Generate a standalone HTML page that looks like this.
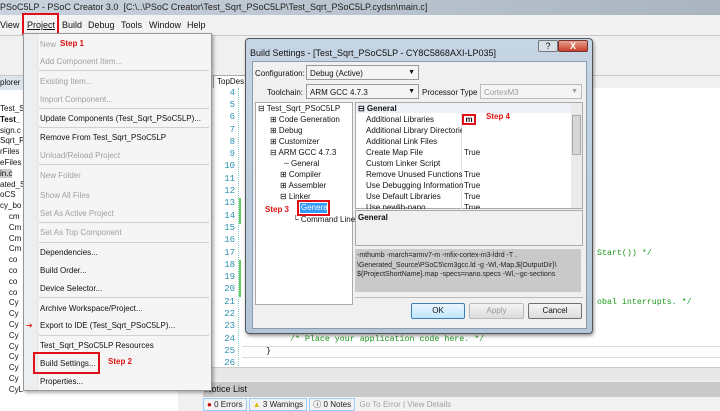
<!DOCTYPE html>
<html><head><meta charset="utf-8"><style>
*{margin:0;padding:0;box-sizing:border-box}
body{width:720px;height:411px;overflow:hidden;position:relative;background:#f0f0f0;font-family:"Liberation Sans",sans-serif;font-size:8px;color:#111}
.a{position:absolute;white-space:nowrap}
.red{color:#e01010;font-weight:bold}
.box{position:absolute;border:2px solid #e0101a}
.dis{color:#a0a0a0}
.sep{position:absolute;left:39px;width:170px;height:1px;background:#d0d0d0}
.ln{position:absolute;left:213px;width:22px;text-align:right;font-family:"Liberation Mono",monospace;font-size:9px;color:#2b91af}
.code{position:absolute;font-family:"Liberation Mono",monospace;font-size:8.3px;color:#1a9a1a;white-space:nowrap}
.tr{position:absolute;font-size:8px;white-space:nowrap}
.pg{position:absolute;left:366px;font-size:8px;white-space:nowrap}
.pv{position:absolute;left:464px;font-size:8px}
.btn{position:absolute;top:303px;height:16px;border:1px solid #707070;border-radius:2px;background:linear-gradient(#f4f4f4,#dcdcdc);text-align:center;line-height:14px;font-size:8px}
.mb{position:absolute;top:20px;font-size:9px}
</style></head><body>
<div class="a" style="left:0;top:0;width:720px;height:15px;background:linear-gradient(90deg,#c9d3dd,#b9c4cf 50%,#a9b4bf);"></div>
<div class="a" style="left:0;top:2px;font-size:9px;color:#222">PSoC5LP - PSoC Creator 3.0 &nbsp;[C:\..\PSoC Creator\Test_Sqrt_PSoC5LP\Test_Sqrt_PSoC5LP.cydsn\main.c]</div>
<div class="a" style="left:0;top:15px;width:720px;height:20px;background:#f2f2f2"></div>
<div class="mb" style="left:0">View</div>
<div class="mb" style="left:27px;text-decoration:underline">Project</div>
<div class="box" style="left:22px;top:13px;width:37px;height:22px"></div>
<div class="mb" style="left:62px">Build</div>
<div class="mb" style="left:88px">Debug</div>
<div class="mb" style="left:121px">Tools</div>
<div class="mb" style="left:149px">Window</div>
<div class="mb" style="left:187px">Help</div>
<div class="a" style="left:0;top:35px;width:720px;height:1px;background:#c8c8c8"></div>
<div class="a" style="left:0;top:75px;width:720px;height:1px;background:#c8c8c8"></div>
<div class="a" style="left:0;top:76px;width:23px;height:335px;background:#fff"></div>
<div class="a" style="left:0;top:76px;width:23px;height:14px;background:#dde4ec"></div>
<div class="a" style="left:0;top:78px;font-size:8px">plorer</div>
<div class="a" style="left:0;top:104px;font-size:8px;line-height:10.8px">Test_S<br><b>Test_</b><br>sign.c<br>Sqrt_P<br>rFiles<br>eFiles<br><span style="background:#ccc">in.c</span><br>ated_S<br>oCS<br>cy_bo<br>&nbsp;&nbsp;&nbsp;&nbsp;cm<br>&nbsp;&nbsp;&nbsp;&nbsp;Cm<br>&nbsp;&nbsp;&nbsp;&nbsp;Cm<br>&nbsp;&nbsp;&nbsp;&nbsp;Cm<br>&nbsp;&nbsp;&nbsp;&nbsp;co<br>&nbsp;&nbsp;&nbsp;&nbsp;co<br>&nbsp;&nbsp;&nbsp;&nbsp;co<br>&nbsp;&nbsp;&nbsp;&nbsp;co<br>&nbsp;&nbsp;&nbsp;&nbsp;Cy<br>&nbsp;&nbsp;&nbsp;&nbsp;Cy<br>&nbsp;&nbsp;&nbsp;&nbsp;Cy<br>&nbsp;&nbsp;&nbsp;&nbsp;Cy<br>&nbsp;&nbsp;&nbsp;&nbsp;Cy<br>&nbsp;&nbsp;&nbsp;&nbsp;Cy<br>&nbsp;&nbsp;&nbsp;&nbsp;Cy<br>&nbsp;&nbsp;&nbsp;&nbsp;Cy<br>&nbsp;&nbsp;&nbsp;&nbsp;CyLib.h</div>
<div class="a" style="left:23px;top:376px;width:155px;height:35px;background:#fff"></div>
<div class="a" style="left:212px;top:88px;width:508px;height:280px;background:#fff"></div>
<div class="a" style="left:213px;top:75px;width:34px;height:13px;background:#fff;border:1px solid #aaa;border-bottom:none;font-size:8px;padding:1px 0 0 3px">TopDes</div>
<div class="a" style="left:238px;top:88px;width:1px;height:280px;border-left:1px dotted #7cb"></div>
<div class="a" style="left:239px;top:198px;width:2px;height:26px;background:#6c6"></div>
<div class="a" style="left:239px;top:260px;width:2px;height:37px;background:#6c6"></div>
<div class="ln" style="top:88px">4</div><div class="ln" style="top:100px">5</div><div class="ln" style="top:112px">6</div><div class="ln" style="top:125px">7</div><div class="ln" style="top:137px">8</div><div class="ln" style="top:149px">9</div><div class="ln" style="top:161px">10</div><div class="ln" style="top:174px">11</div><div class="ln" style="top:186px">12</div><div class="ln" style="top:198px">13</div><div class="ln" style="top:211px">14</div><div class="ln" style="top:223px">15</div><div class="ln" style="top:235px">16</div><div class="ln" style="top:248px">17</div><div class="ln" style="top:260px">18</div><div class="ln" style="top:272px">19</div><div class="ln" style="top:284px">20</div><div class="ln" style="top:297px">21</div><div class="ln" style="top:309px">22</div><div class="ln" style="top:321px">23</div><div class="ln" style="top:334px">24</div><div class="ln" style="top:346px">25</div><div class="ln" style="top:358px">26</div>
<div class="code" style="left:597px;top:249px">Start()) */</div>
<div class="code" style="left:597px;top:298px">obal interrupts. */</div>
<div class="code" style="left:290px;top:335px">/* Place your application code here. */</div>
<div class="a" style="left:242px;top:346px;width:478px;height:12px;border-top:1px solid #ddd;border-bottom:1px solid #ddd"></div>
<div class="code" style="left:266px;top:347px;color:#111">}</div>
<div class="a" style="left:205px;top:367px;width:515px;height:14px;background:#e8e8e8;border-top:1px solid #ccc"></div>
<div class="a" style="left:203px;top:382px;width:517px;height:15px;background:#c9c9c9"></div>
<div class="a" style="left:205px;top:384px;font-size:9px">Notice List</div>
<div class="a" style="left:203px;top:397px;width:517px;height:14px;background:#f2f2f2"></div>
<div class="a" style="left:203px;top:399px;font-size:8px;color:#222"><span style="border:1px solid #9cf;padding:1px 3px"><span style="color:#c00">●</span> 0 Errors</span> <span style="border:1px solid #9cf;padding:1px 3px"><span style="color:#db0">▲</span> 3 Warnings</span> <span style="border:1px solid #9cf;padding:1px 3px">ⓘ 0 Notes</span> <span class="dis">&nbsp;Go To Error | View Details</span></div>
<div class="a" style="left:23px;top:33px;width:189px;height:358px;background:#f5f5f5;border:1px solid #979797;box-shadow:2px 2px 3px rgba(0,0,0,.3)"></div>
<div class="a" style="left:24px;top:34px;width:14px;height:356px;background:#eceef0;border-right:1px solid #e2e2e2"></div>
<div class="a dis" style="left:40px;top:40px">New</div><div class="a red" style="left:60px;top:39px">Step 1</div>
<div class="a dis" style="left:40px;top:57px">Add Component Item...</div>
<div class="sep" style="top:70px"></div>
<div class="a dis" style="left:40px;top:77px">Existing Item...</div>
<div class="a dis" style="left:40px;top:95px">Import Component...</div>
<div class="sep" style="top:108px"></div>
<div class="a" style="left:40px;top:114px">Update Components (Test_Sqrt_PSoC5LP)...</div>
<div class="sep" style="top:127px"></div>
<div class="a" style="left:40px;top:133px">Remove From Test_Sqrt_PSoC5LP</div>
<div class="a dis" style="left:40px;top:151px">Unload/Reload Project</div>
<div class="sep" style="top:164px"></div>
<div class="a dis" style="left:40px;top:171px">New Folder</div>
<div class="a dis" style="left:40px;top:191px">Show All Files</div>
<div class="a dis" style="left:40px;top:209px">Set As Active Project</div>
<div class="sep" style="top:222px"></div>
<div class="a dis" style="left:40px;top:228px">Set As Top Component</div>
<div class="sep" style="top:242px"></div>
<div class="a" style="left:40px;top:248px">Dependencies...</div>
<div class="a" style="left:40px;top:266px">Build Order...</div>
<div class="a" style="left:40px;top:284px">Device Selector...</div>
<div class="sep" style="top:297px"></div>
<div class="a" style="left:40px;top:304px">Archive Workspace/Project...</div>
<div class="a" style="left:40px;top:321px">Export to IDE (Test_Sqrt_PSoC5LP)...</div>
<div class="a" style="left:26px;top:321px;color:#d22;font-size:8px">➔</div>
<div class="sep" style="top:335px"></div>
<div class="a" style="left:40px;top:341px">Test_Sqrt_PSoC5LP Resources</div>
<div class="a" style="left:40px;top:359px">Build Settings...</div>
<div class="box" style="left:33px;top:352px;width:67px;height:22px"></div>
<div class="a red" style="left:108px;top:357px">Step 2</div>
<div class="a" style="left:40px;top:377px">Properties...</div>
<div class="a" style="left:245px;top:38px;width:348px;height:296px;background:linear-gradient(#c5d5e4,#b3c6d8);border:1px solid #555;border-radius:4px;box-shadow:1px 2px 3px rgba(0,0,0,.4)"></div>
<div class="a" style="left:250px;top:48px;font-size:9px;color:#111">Build Settings - [Test_Sqrt_PSoC5LP - CY8C5868AXI-LP035]</div>
<div class="a" style="left:538px;top:40px;width:20px;height:12px;border:1px solid #777;border-radius:2px;background:#d8e0e8;text-align:center;font-size:9px;line-height:10px">?</div>
<div class="a" style="left:558px;top:40px;width:30px;height:12px;border:1px solid #733;border-radius:2px;background:linear-gradient(#e8a090,#c8402c);color:#fff;text-align:center;font-size:9px;line-height:10px;font-weight:bold">X</div>
<div class="a" style="left:252px;top:61px;width:335px;height:268px;background:#f0f0f0;border:1px solid #8c9cac"></div>
<div class="a" style="left:255px;top:69px">Configuration:</div>
<div class="a" style="left:306px;top:65px;width:113px;height:15px;background:#f4f4f4;border:1px solid #999;padding:3px 0 0 3px">Debug (Active)<span style="position:absolute;right:3px;font-size:7px">▼</span></div>
<div class="a" style="left:267px;top:88px">Toolchain:</div>
<div class="a" style="left:306px;top:84px;width:113px;height:15px;background:#f4f4f4;border:1px solid #999;padding:3px 0 0 3px">ARM GCC 4.7.3<span style="position:absolute;right:3px;font-size:7px">▼</span></div>
<div class="a" style="left:422px;top:88px">Processor Type</div>
<div class="a" style="left:480px;top:84px;width:102px;height:15px;background:#f4f4f4;border:1px solid #bbb;padding:3px 0 0 3px;color:#999">CortexM3<span style="position:absolute;right:3px;font-size:7px">▼</span></div>
<div class="a" style="left:255px;top:102px;width:98px;height:203px;background:#fff;border:1px solid #aaa"></div>
<div class="tr" style="left:258px;top:104px">⊟ Test_Sqrt_PSoC5LP</div>
<div class="tr" style="left:270px;top:115px">⊞ Code Generation</div>
<div class="tr" style="left:270px;top:126px">⊞ Debug</div>
<div class="tr" style="left:270px;top:137px">⊞ Customizer</div>
<div class="tr" style="left:270px;top:148px">⊟ ARM GCC 4.7.3</div>
<div class="tr" style="left:284px;top:159px">┄ General</div>
<div class="tr" style="left:280px;top:170px">⊞ Compiler</div>
<div class="tr" style="left:280px;top:181px">⊞ Assembler</div>
<div class="tr" style="left:280px;top:192px">⊟ Linker</div>
<div class="a" style="left:300px;top:203px;width:27px;height:10px;background:#3399ff;color:#fff;font-size:8px;line-height:10px;padding-left:1px">General</div>
<div class="box" style="left:297px;top:200px;width:33px;height:16px"></div>
<div class="a red" style="left:265px;top:205px">Step 3</div>
<div class="tr" style="left:293px;top:215px">└ Command Line</div>
<div class="a" style="left:355px;top:102px;width:228px;height:107px;background:#fff;border:1px solid #aaa"></div>
<div class="a" style="left:356px;top:103px;width:215px;height:10px;background:#eef2f8"></div>
<div class="a" style="left:358px;top:104px;font-weight:bold">⊟ General</div>
<div class="a" style="left:461px;top:113px;width:1px;height:96px;background:#e0e0e0"></div>
<div class="pg" style="top:115px">Additional Libraries</div>
<div class="pg" style="top:126px">Additional Library Directories</div>
<div class="a" style="left:462px;top:124px;width:109px;height:11px;background:#fff"></div>
<div class="pg" style="top:137px">Additional Link Files</div>
<div class="pg" style="top:148px">Create Map File</div><div class="pv" style="top:148px">True</div>
<div class="pg" style="top:159px">Custom Linker Script</div>
<div class="pg" style="top:170px">Remove Unused Functions</div><div class="pv" style="top:170px">True</div>
<div class="pg" style="top:181px">Use Debugging Information</div><div class="pv" style="top:181px">True</div>
<div class="pg" style="top:192px">Use Default Libraries</div><div class="pv" style="top:192px">True</div>
<div class="pg" style="top:203px;height:6px;overflow:hidden">Use newlib-nano</div><div class="pv" style="top:203px;height:6px;overflow:hidden">True</div>
<div class="a" style="left:462px;top:114px;width:14px;height:11px;border:2px solid #e0101a;background:#fff;font-size:8px;text-align:center;line-height:7px;font-weight:bold">m</div>
<div class="a red" style="left:486px;top:112px">Step 4</div>
<div class="a" style="left:571px;top:103px;width:11px;height:105px;background:#eaeaea"></div>
<div class="a" style="left:572px;top:115px;width:9px;height:40px;background:#d6d6d6;border:1px solid #aaa"></div>
<div class="a" style="left:355px;top:210px;width:228px;height:36px;background:#f0f0f0;border:1px solid #aaa"></div>
<div class="a" style="left:358px;top:213px;font-weight:bold">General</div>
<div class="a" style="left:355px;top:249px;width:226px;height:43px;background:#c9c9c9"></div>
<div class="a" style="left:357px;top:251px;font-size:7px;line-height:9.5px;color:#222">-mthumb -march=armv7-m -mfix-cortex-m3-ldrd -T .<br>\Generated_Source\PSoC5\cm3gcc.ld -g -Wl,-Map,${OutputDir}\<br>${ProjectShortName}.map -specs=nano.specs -Wl,--gc-sections</div>
<div class="a" style="left:355px;top:297px;width:228px;height:1px;background:#bbb"></div>
<div class="btn" style="left:411px;width:54px;border-color:#3c7fb1;background:linear-gradient(#eaf6fd,#bee6fd)">OK</div>
<div class="btn" style="left:469px;width:55px;color:#999;border-color:#bbb">Apply</div>
<div class="btn" style="left:528px;width:54px">Cancel</div>
</body></html>
